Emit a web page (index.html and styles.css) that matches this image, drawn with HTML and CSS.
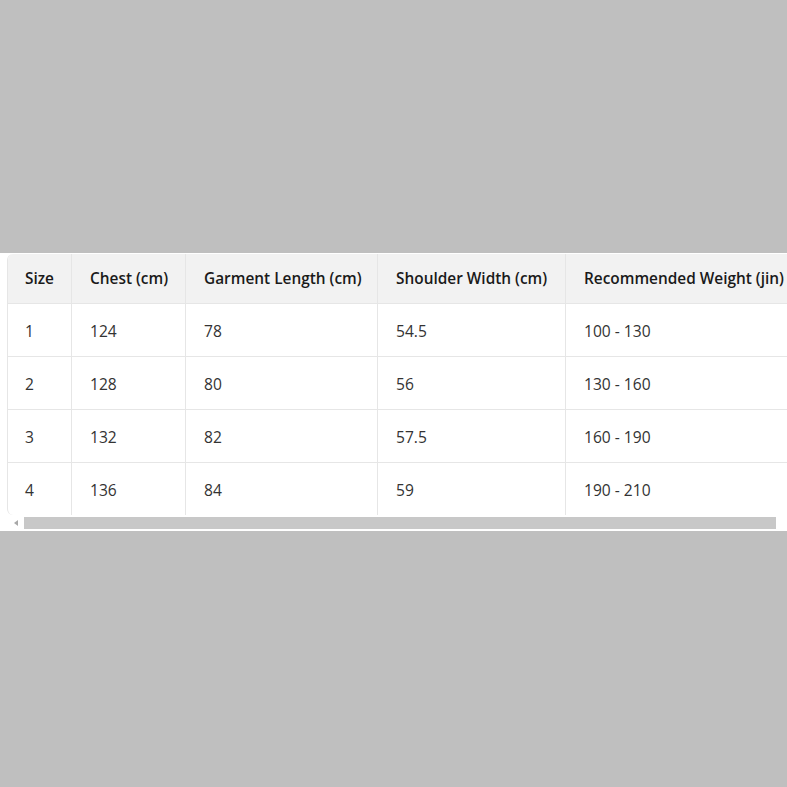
FILE: index.html
```html
<!DOCTYPE html>
<html lang="en">
<head>
<meta charset="utf-8">
<title>Size Chart</title>
<link rel="stylesheet" href="styles.css">
</head>
<body>
<div class="panel">
  <div class="table-wrap">
    <table class="size-table">
      <colgroup>
        <col class="c1"><col class="c2"><col class="c3"><col class="c4"><col class="c5">
      </colgroup>
      <thead>
        <tr><th>Size</th><th>Chest (cm)</th><th>Garment Length (cm)</th><th>Shoulder Width (cm)</th><th>Recommended Weight (jin)</th></tr>
      </thead>
      <tbody>
        <tr><td>1</td><td>124</td><td>78</td><td>54.5</td><td>100 - 130</td></tr>
        <tr><td>2</td><td>128</td><td>80</td><td>56</td><td>130 - 160</td></tr>
        <tr><td>3</td><td>132</td><td>82</td><td>57.5</td><td>160 - 190</td></tr>
        <tr><td>4</td><td>136</td><td>84</td><td>59</td><td>190 - 210</td></tr>
      </tbody>
    </table>
  </div>
  <div class="scrollbar">
    <div class="sb-btn"><span class="sb-arrow"></span></div>
    <div class="sb-thumb"></div>
  </div>
</div>
</body>
</html>
```
FILE: styles.css
```css
html, body {
  margin: 0;
  padding: 0;
  overflow: hidden;
}
body {
  background: #bfbfbf;
  width: 787px;
  height: 787px;
  font-family: "Open Sans", "Noto Sans", sans-serif;
}
.panel {
  margin-top: 253px;
  background: #fff;
  padding: 1px 0 2px 7px;
  width: 820px;
}
.table-wrap {
  border-left: 1px solid #e6e6e6;
  border-top-left-radius: 6px;
  border-bottom-left-radius: 6px;
  overflow: hidden;
  width: 800px;
}
.size-table {
  border-collapse: separate;
  border-spacing: 0;
  table-layout: fixed;
  width: 797px;
}
.c1 { width: 64px; }
.c2 { width: 114px; }
.c3 { width: 192px; }
.c4 { width: 188px; }
.c5 { width: 239px; }
.size-table th,
.size-table td {
  text-align: left;
  padding: 0 0 0 18px;
  border-right: 1px solid #e6e6e6;
  border-bottom: 1px solid #e6e6e6;
  white-space: nowrap;
}
.size-table th:first-child,
.size-table td:first-child {
  padding-left: 17px;
}
.size-table th {
  height: 49px;
  background: #f2f2f2;
  font-weight: 600;
  font-size: 15.4px;
  color: #1a1a1a;
}
.size-table td {
  height: 50px;
  padding-top: 2px;
  color: #333;
  font-weight: 400;
  font-size: 15.6px;
}
.size-table tbody tr:last-child td {
  border-bottom: none;
  height: 50px;
}
.scrollbar {
  display: flex;
  align-items: center;
  height: 13px;
  margin-top: 1px;
}
.sb-btn {
  width: 17px;
  height: 13px;
  display: flex;
  align-items: center;
  justify-content: center;
}
.sb-arrow {
  width: 0;
  height: 0;
  border-top: 3px solid transparent;
  border-bottom: 3px solid transparent;
  border-right: 4px solid #a8a8a8;
}
.sb-thumb {
  width: 752px;
  height: 12px;
  background: #c8c8c8;
}
```
